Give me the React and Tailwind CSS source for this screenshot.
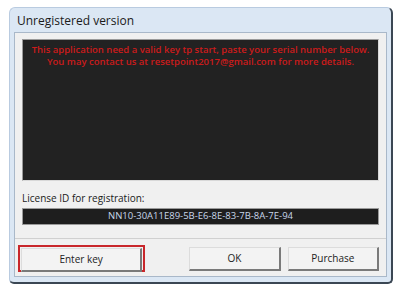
export default function App() {
  const btn =
    "h-[24px] flex items-center justify-center bg-[#f3f3f3] border border-[#dcdcdc] border-r-[#7a7a7a] border-b-[#7a7a7a] border-r-2 border-b-2 text-[10px] text-[#222]";

  return (
    <div className="w-[405px] h-[295px] bg-white pt-[7px] pl-[9px] font-['Open_Sans',sans-serif]">
      <div className="w-[384px] h-[277px] bg-[#dbe7f4] border border-[#b9cbe0] border-r-[#3b4754] border-b-[#3b4754] border-r-2 border-b-2 rounded-t-[6px] rounded-b-[5px] flex flex-col px-[4px] pb-[5px]">
        <div className="h-[24px] flex items-center pl-[3px] pt-[2px] text-[12px] text-[#1a1a1a]">
          Unregistered version
        </div>
        <div className="flex-1 bg-[#f0f0f0] border border-[#a9b8c9] flex flex-col px-[7px] pt-[6px]">
          <div className="h-[142px] bg-[#222222] border border-[#d8d8d8] border-t-[#9a9a9a] border-l-[#9a9a9a] pt-[4px] text-center text-[9.5px] font-semibold leading-[12px] text-[#cc1b1b]">
            <div>This application need a valid key tp start, paste your serial number below.</div>
            <div>You may contact us at resetpoint2017@gmail.com for more details.</div>
          </div>
          <div className="mt-[11px] text-[10px] leading-[13px] text-[#1a1a1a]">
            License ID for registration:
          </div>
          <div className="mt-[3px] h-[17px] bg-[#1e1e1e] border border-[#9a9a9a] flex items-center justify-center text-[9.5px] text-[#c8d7ea]">
            NN10-30A11E89-5B-E6-8E-83-7B-8A-7E-94
          </div>
          <div className="mt-[13px] -mx-[7px] border-t border-[#d0d0d0]" />
          <div className="flex items-center mt-[6px] -ml-[4px]">
            <div className="w-[128px] h-[27px] border-2 border-[#c8262b] p-[1px]">
              <div className={btn + " h-[21px] w-full"}>Enter key</div>
            </div>
            <div className={btn + " w-[92px] ml-[44px]"}>OK</div>
            <div className={btn + " w-[92px] ml-[7px]"}>Purchase</div>
          </div>
        </div>
      </div>
    </div>
  );
}
